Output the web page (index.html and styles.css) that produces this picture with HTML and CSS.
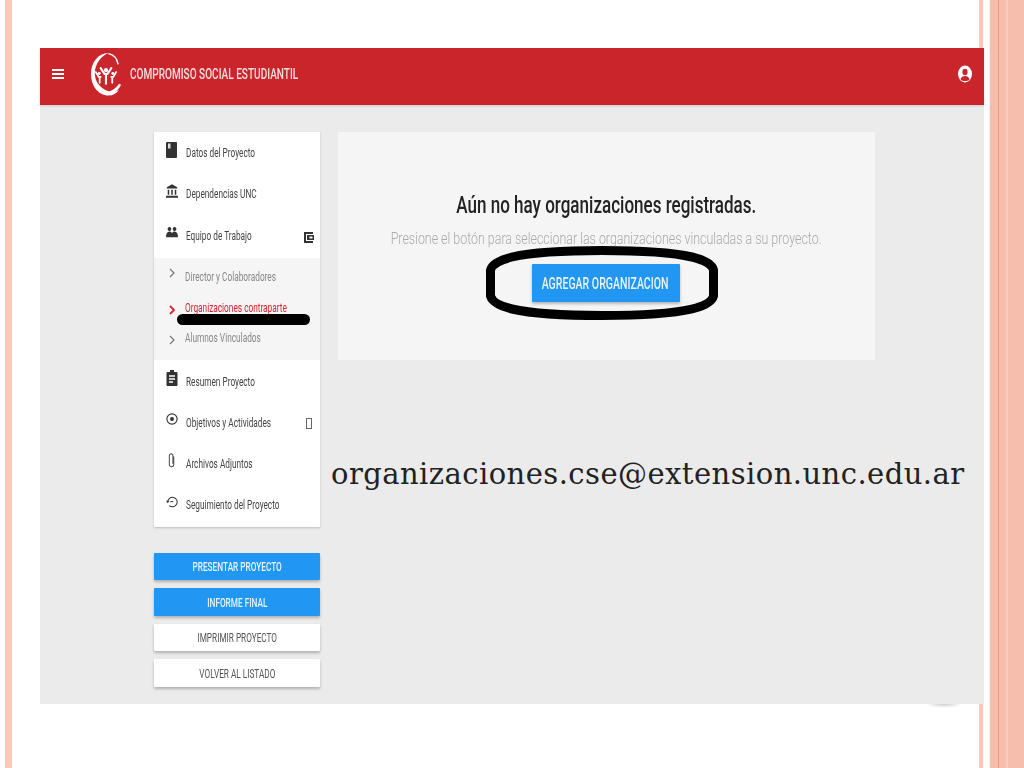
FILE: index.html
```html
<!DOCTYPE html>
<html lang="es">
<head>
<meta charset="utf-8">
<title>Compromiso Social Estudiantil</title>
<link rel="stylesheet" href="styles.css">
</head>
<body>
<div class="slide">
  <div class="deco-left"></div>
  <div class="deco-thin"></div>
  <div class="deco-right"><i></i><b></b></div>

  <div class="shot">
    <header class="topbar">
      <div class="burger"><span></span><span></span><span></span></div>
      <svg class="logo" viewBox="0 0 32 46" aria-hidden="true">
        <path fill="#fff" d="M19 1C8 2 1 11 1 23c0 11 6 20 15 22 6 1 11-1 14-6-4 3-9 3-13 1C9 36 5 30 5 22 5 13 11 5 19 1z"/>
        <path fill="none" stroke="#fff" stroke-width="1.500" d="M19 2c5 1 9 5 10 11"/>
        <g fill="none" stroke="#fff" stroke-linecap="round">
          <path stroke-width="2.200" d="M11 17l4 6h3l4-6M16.500 23v10"/>
          <path stroke-width="1.800" d="M6 21l3 5h2M10 26v6M27 21l-3 5h-2M23 26v6"/>
        </g>
        <g fill="#fff">
          <circle cx="16.500" cy="19" r="2.100"/><circle cx="9.500" cy="22.500" r="1.500"/><circle cx="23.500" cy="22.500" r="1.500"/>
          <path d="M14 42c6 0 12-3 16-9l2 1c-3 7-10 11-18 10z"/>
        </g>
      </svg>
      <span class="brand"><span class="sq">COMPROMISO SOCIAL ESTUDIANTIL</span></span>
      <svg class="user" viewBox="0 0 14 18" aria-hidden="true">
        <ellipse cx="7" cy="9" rx="7" ry="8.500" fill="#fff"/>
        <ellipse cx="7" cy="7" rx="2.600" ry="3.200" fill="#c9252b"/>
        <path fill="#c9252b" d="M2.500 14.500c.5-2.500 2.500-3.500 4.500-3.500s4 1 4.500 3.500c-1.200 1-2.800 1.500-4.500 1.500s-3.300-.5-4.500-1.500z"/>
      </svg>
    </header>

    <div class="content">
      <div class="left">
        <nav class="menu">
          <a class="row"><svg class="ic" viewBox="0 0 12 16"><path fill="#333" d="M1 0h9a1 1 0 0 1 1 1v14a1 1 0 0 1-1 1H1a1 1 0 0 1-1-1V1a1 1 0 0 1 1-1z"/><rect x="2" y="1.500" width="2.500" height="5" fill="#ddd"/></svg><span class="sq">Datos del Proyecto</span></a>
          <a class="row"><svg class="ic" viewBox="0 0 14 16"><path fill="#333" d="M7 0l6 3.500v1.500H1V3.500zM0 13.500h14V16H0zM2 6.500h1.800v6H2zM6.100 6.500h1.800v6H6.100zM10.200 6.500H12v6h-1.800z"/></svg><span class="sq">Dependencias UNC</span></a>
          <a class="row"><svg class="ic" viewBox="0 0 14 12"><circle cx="4" cy="2.500" r="2.200" fill="#333"/><circle cx="10" cy="2.500" r="2.200" fill="#333"/><path fill="#333" d="M0 12c0-4 1.500-6.500 4-6.500 1.400 0 2.400.8 3 2 .6-1.200 1.600-2 3-2 2.500 0 4 2.500 4 6.500z"/></svg><span class="sq">Equipo de Trabajo</span><svg class="wallet" viewBox="0 0 10 11"><path fill="#333" d="M0 0h9v2H2v7h7v2H0z"/><path fill="#333" d="M3 3h7v5H3z"/><rect x="5.500" y="4.500" width="3" height="2" fill="#fff"/></svg></a>

          <div class="sub">
            <a class="subrow"><svg class="chev up" viewBox="0 0 6 10"><path d="M1 1l4 4-4 4" fill="none" stroke="#777" stroke-width="1.200"/></svg><span class="sq">Director y Colaboradores</span></a>
            <a class="subrow active"><svg class="chev down" viewBox="0 0 6 10"><path d="M1 1l4 4-4 4" fill="none" stroke="#d9232e" stroke-width="1.800"/></svg><span class="sq">Organizaciones contraparte</span><span class="underline"></span></a>
            <a class="subrow"><svg class="chev down" viewBox="0 0 6 10"><path d="M1 1l4 4-4 4" fill="none" stroke="#777" stroke-width="1.200"/></svg><span class="sq">Alumnos Vinculados</span></a>
          </div>

          <a class="row"><svg class="ic" viewBox="0 0 11 16"><path fill="#333" d="M1 2h2.500V0h4v2H10a1 1 0 0 1 1 1v12a1 1 0 0 1-1 1H1a1 1 0 0 1-1-1V3a1 1 0 0 1 1-1z"/><path stroke="#fff" stroke-width="1.400" d="M2.500 6h6M2.500 9h6M2.500 12h4"/></svg><span class="sq">Resumen Proyecto</span></a>
          <a class="row"><svg class="ic" viewBox="0 0 14 14"><circle cx="7" cy="7" r="6" fill="none" stroke="#333" stroke-width="1.300"/><circle cx="7" cy="7" r="2.300" fill="#333"/></svg><span class="sq">Objetivos y Actividades</span><span class="tofu"></span></a>
          <a class="row"><svg class="ic" viewBox="0 0 10 18"><path fill="none" stroke="#555" stroke-width="1.200" d="M7 4v9a2.500 2.500 0 0 1-5 0V3a2 2 0 0 1 4 0v9"/></svg><span class="sq">Archivos Adjuntos</span></a>
          <a class="row"><svg class="ic" viewBox="0 0 14 14"><path fill="none" stroke="#333" stroke-width="1.200" d="M2 7a5.500 5.500 0 1 1 1.800 4.100"/><path fill="#333" d="M0 5.500h4L2 8.500z"/><path fill="#333" d="M5 6h3.500v1.200H5z"/></svg><span class="sq">Seguimiento del Proyecto</span></a>
        </nav>

        <div class="actions">
          <a class="btn blue"><span class="sq">PRESENTAR PROYECTO</span></a>
          <a class="btn blue"><span class="sq">INFORME FINAL</span></a>
          <a class="btn plain"><span class="sq">IMPRIMIR PROYECTO</span></a>
          <a class="btn plain"><span class="sq">VOLVER AL LISTADO</span></a>
        </div>
      </div>

      <section class="card">
        <h1 class="title"><span class="sq">Aún no hay organizaciones registradas.</span></h1>
        <p class="hint"><span class="sq">Presione el botón para seleccionar las organizaciones vinculadas a su proyecto.</span></p>
        <div class="cta-wrap">
          <a class="cta"><span class="sq">AGREGAR ORGANIZACION</span></a>
          <svg class="ring" viewBox="0 0 232 74" aria-hidden="true"><path fill="none" stroke="#000" stroke-width="9" stroke-linejoin="round" d="M4.500 24C6 18 14 14 26 11 48 6 80 4.500 116 4.500s68 1.500 90 6.500c12 3 20 7 21.500 13v26c-1.500 6-9.500 10-21.500 13-22 5-54 6.500-90 6.500s-68-1.500-90-6.500C14 60 6 56 4.500 50z"/></svg>
        </div>
      </section>
    </div>
    <div class="fab-shadow"></div>
  </div>

  <p class="email">organizaciones.cse@extension.unc.edu.ar</p>
</div>
</body>
</html>
```
FILE: styles.css
```css
html, body { margin: 0; padding: 0; background: #fff; }
.slide {
  position: relative;
  width: 1024px;
  height: 768px;
  overflow: hidden;
  padding: 48px 0 0 40px;
  box-sizing: border-box;
  font-family: Roboto, "Liberation Sans", sans-serif;
}
.deco-left { position: absolute; left: 5px; top: 0; width: 7px; height: 768px; background: #fcc8b8; }
.deco-thin { position: absolute; left: 979px; top: 0; width: 4px; height: 768px; background: #fcc8b8; }
.deco-right {
  position: absolute; left: 989px; top: 0; width: 35px; height: 768px;
  background: linear-gradient(90deg, #f8f0ec 0, #f8f0ec 1px, #f6bfad 1px, #f6bfad 100%);
}
.deco-right i { position: absolute; left: 9px; top: 0; width: 1px; height: 100%; background: #ee9a72; }
.deco-right b { position: absolute; left: 17px; top: 0; width: 2px; height: 100%; background: #f9ccbd; }
.shot {
  position: relative;
  width: 944px;
  height: 656px;
  background: #ebebeb;
  filter: blur(.35px);
}
.sq { display: inline-block; white-space: nowrap; transform-origin: left center; }
.topbar {
  height: 57px;
  box-sizing: border-box;
  padding-bottom: 5px;
  background: #c9252b;
  display: flex;
  align-items: center;
  color: #fff;
  box-shadow: 0 1px 2px rgba(0,0,0,.15);
}
.burger { display: flex; flex-direction: column; gap: 2.5px; width: 12px; margin: 0 1px 0 12px; }
.burger span { display: block; height: 1.500px; background: #fff; }
.logo { width: 31px; height: 46px; margin-left: 25px; }
.brand { font-size: 15px; font-weight: 500; margin-left: 9px; flex: 1; color: #f6dede; }
.brand .sq { transform: scaleX(.67); }
.user { width: 14px; height: 18px; margin-right: 12px; }
.content { display: flex; align-items: flex-start; padding: 27px 0 0 114px; gap: 18px; }
.left { width: 166px; display: flex; flex-direction: column; gap: 26px; }
.menu { background: #fff; box-shadow: 0 1px 2px rgba(0,0,0,.2); color: #444; font-size: 12.500px; padding-bottom: 1px; }
.row { height: 41.300px; display: flex; align-items: center; position: relative; padding-left: 12px; }
.row .ic { width: 12px; height: 16px; margin-right: 8px; flex: none; position: relative; top: -3px; }
.row .sq { font-weight: 400; transform: scaleX(.66); }
.wallet { position: absolute; right: 6px; top: 17px; width: 10px; height: 11px; }
.tofu { position: absolute; right: 8px; top: 16px; width: 4px; height: 9px; border: 1px solid #666; }
.sub { background: #f5f5f5; margin-top: 2px; padding: 4px 0 7px; color: #888; font-size: 12px; }
.subrow { height: 30.500px; display: flex; align-items: center; padding-left: 15px; position: relative; }
.subrow .sq { transform: scaleX(.69); }
.subrow .chev { width: 6px; height: 10px; margin-right: 10px; flex: none; }
.chev.up { margin-top: -8px; }
.chev.down { margin-top: 4px; }
.subrow.active { color: #d9232e; }
.underline { position: absolute; left: 23px; top: 22px; width: 133px; height: 11px; background: #000; border-radius: 6px; }
.actions { display: flex; flex-direction: column; gap: 8px; }
.btn { height: 27.500px; display: flex; align-items: center; justify-content: center; font-size: 13.500px; box-shadow: 0 2px 3px rgba(0,0,0,.25); border-radius: 1px; }
.btn .sq { transform-origin: center; transform: scaleX(.61); }
.btn.blue { background: #2196f3; color: #e8f4ff; font-weight: 500; }
.btn.plain { background: #fff; color: #555; }
.card {
  width: 537px; height: 228px; background: #f5f5f5;
  box-sizing: border-box; padding-top: 58px;
}
.title, .hint { display: flex; justify-content: center; white-space: nowrap; }
.title { margin: 0; font-size: 24px; font-weight: 500; color: #222; line-height: 30px; }
.title .sq { transform-origin: center; transform: scaleX(.71); }
.hint { margin: 8px 0 0; font-size: 17px; font-weight: 300; color: #aaa; line-height: 20px; }
.hint .sq { transform-origin: center; transform: scaleX(.73); }
.cta-wrap { position: relative; margin-top: 16px; display: flex; justify-content: center; }
.cta {
  width: 148px; height: 38px; background: #2196f3; color: #e8f4ff; margin-right: 2px;
  display: flex; align-items: center; justify-content: center; white-space: nowrap;
  font-size: 16px; font-weight: 500; box-shadow: 0 2px 3px rgba(0,0,0,.25); border-radius: 1px;
}
.cta .sq { transform-origin: center; transform: scaleX(.66); }
.ring { position: absolute; left: 148px; top: -18px; width: 232px; height: 74px; }
.fab-shadow {
  position: absolute; left: 886px; top: 656px; width: 36px; height: 4px;
  background: radial-gradient(ellipse at 50% 0, rgba(0,0,0,.2), rgba(0,0,0,0) 70%);
}
.email {
  position: absolute; left: 331px; top: 454px; margin: 0;
  font-family: "DejaVu Serif", serif; font-size: 29px; letter-spacing: .45px; line-height: 40px; color: #222; white-space: nowrap;
}
```
